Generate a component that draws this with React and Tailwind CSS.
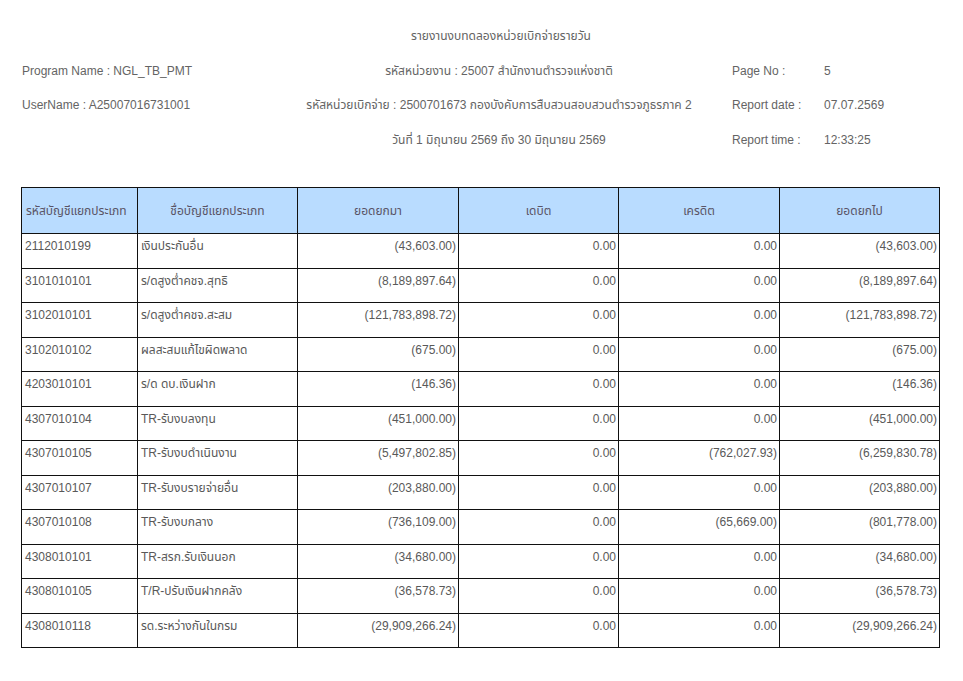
import React from "react";

const rows = [
  ["2112010199", "เงินประกันอื่น", "(43,603.00)", "0.00", "0.00", "(43,603.00)"],
  ["3101010101", "ร/ดสูงต่ำคชจ.สุทธิ", "(8,189,897.64)", "0.00", "0.00", "(8,189,897.64)"],
  ["3102010101", "ร/ดสูงต่ำคชจ.สะสม", "(121,783,898.72)", "0.00", "0.00", "(121,783,898.72)"],
  ["3102010102", "ผลสะสมแก้ไขผิดพลาด", "(675.00)", "0.00", "0.00", "(675.00)"],
  ["4203010101", "ร/ด ดบ.เงินฝาก", "(146.36)", "0.00", "0.00", "(146.36)"],
  ["4307010104", "TR-รับงบลงทุน", "(451,000.00)", "0.00", "0.00", "(451,000.00)"],
  ["4307010105", "TR-รับงบดำเนินงาน", "(5,497,802.85)", "0.00", "(762,027.93)", "(6,259,830.78)"],
  ["4307010107", "TR-รับงบรายจ่ายอื่น", "(203,880.00)", "0.00", "0.00", "(203,880.00)"],
  ["4307010108", "TR-รับงบกลาง", "(736,109.00)", "0.00", "(65,669.00)", "(801,778.00)"],
  ["4308010101", "TR-สรก.รับเงินนอก", "(34,680.00)", "0.00", "0.00", "(34,680.00)"],
  ["4308010105", "T/R-ปรับเงินฝากคลัง", "(36,578.73)", "0.00", "0.00", "(36,578.73)"],
  ["4308010118", "รด.ระหว่างกันในกรม", "(29,909,266.24)", "0.00", "0.00", "(29,909,266.24)"],
];

const font = {
  fontFamily: '"Liberation Sans", "Noto Sans Thai", "Noto Sans", sans-serif',
};

export default function App() {
  return (
    <div className="w-[963px] h-[681px] bg-white text-[12px] text-[#646464]" style={font}>
      <div className="pt-[19px] pl-[22px]">
        <div className="grid grid-cols-[270px_414px_92px_1fr] [&>div]:h-[34.5px] [&>div]:flex [&>div]:items-center [&>div]:whitespace-nowrap">
          <div></div>
          <div className="justify-center pl-[4px]">รายงานงบทดลองหน่วยเบิกจ่ายรายวัน</div>
          <div></div>
          <div></div>

          <div>Program Name : NGL_TB_PMT</div>
          <div className="justify-center">รหัสหน่วยงาน : 25007 สำนักงานตำรวจแห่งชาติ</div>
          <div className="pl-[26px]">Page No :</div>
          <div className="pl-[26px]">5</div>

          <div>UserName : A25007016731001</div>
          <div className="justify-center">รหัสหน่วยเบิกจ่าย : 2500701673 กองบังคับการสืบสวนสอบสวนตำรวจภูธรภาค 2</div>
          <div className="pl-[26px]">Report date :</div>
          <div className="pl-[26px]">07.07.2569</div>

          <div></div>
          <div className="justify-center">วันที่ 1 มิถุนายน 2569 ถึง 30 มิถุนายน 2569</div>
          <div className="pl-[26px]">Report time :</div>
          <div className="pl-[26px]">12:33:25</div>
        </div>
      </div>

      <div className="pl-[21px] pt-[30px]">
        <table className="border-collapse table-fixed w-[918px] text-[#595959]">
          <colgroup>
            <col className="w-[116px]" />
            <col className="w-[160px]" />
            <col className="w-[161px]" />
            <col className="w-[160px]" />
            <col className="w-[161px]" />
            <col className="w-[160px]" />
          </colgroup>
          <thead>
            <tr className="h-[46px] bg-[#b9dcff] text-[#5a5466]">
              <th className="border border-[#111] font-normal text-left px-[4px] whitespace-nowrap">รหัสบัญชีแยกประเภท</th>
              <th className="border border-[#111] font-normal text-center">ชื่อบัญชีแยกประเภท</th>
              <th className="border border-[#111] font-normal text-center">ยอดยกมา</th>
              <th className="border border-[#111] font-normal text-center">เดบิต</th>
              <th className="border border-[#111] font-normal text-center">เครดิต</th>
              <th className="border border-[#111] font-normal text-center">ยอดยกไป</th>
            </tr>
          </thead>
          <tbody>
            {rows.map((r) => (
              <tr key={r[0]} className="h-[34.5px]">
                <td className="border border-[#111] align-top pt-[3px] px-[3px]">{r[0]}</td>
                <td className="border border-[#111] align-top pt-[3px] px-[3px]">{r[1]}</td>
                <td className="border border-[#111] align-top pt-[3px] px-[2px] text-right">{r[2]}</td>
                <td className="border border-[#111] align-top pt-[3px] px-[2px] text-right">{r[3]}</td>
                <td className="border border-[#111] align-top pt-[3px] px-[2px] text-right">{r[4]}</td>
                <td className="border border-[#111] align-top pt-[3px] px-[2px] text-right">{r[5]}</td>
              </tr>
            ))}
          </tbody>
        </table>
      </div>
    </div>
  );
}
